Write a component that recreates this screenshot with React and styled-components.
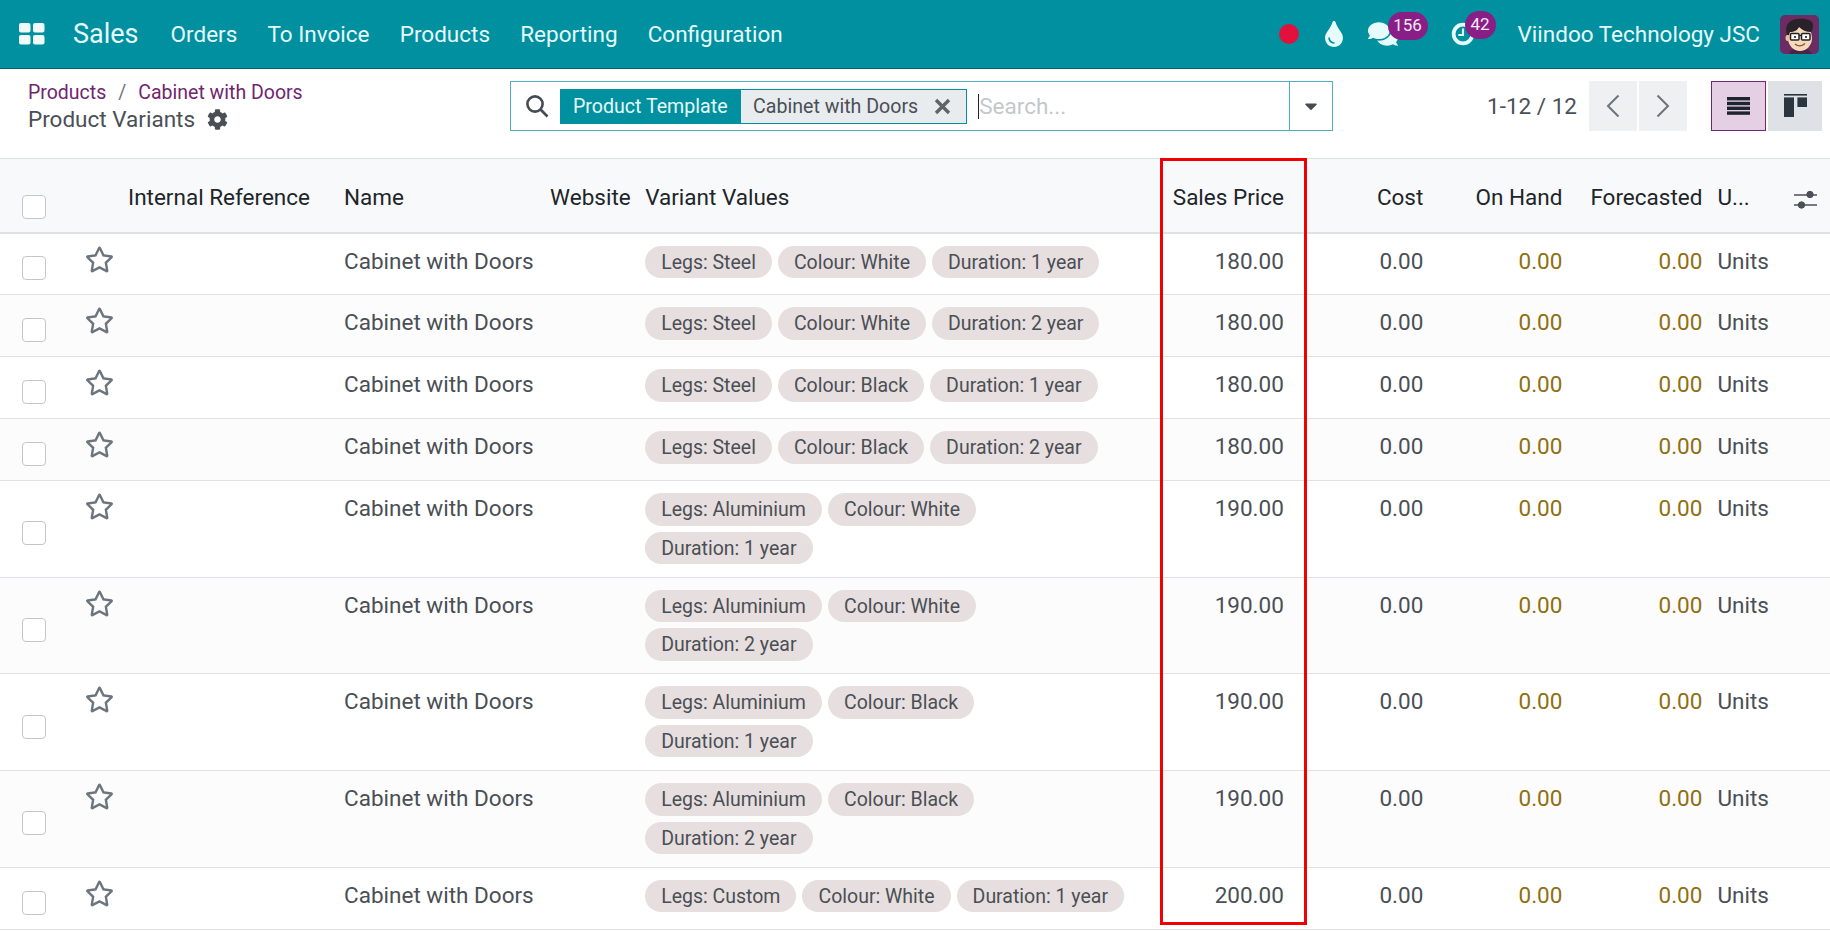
import React from 'react'
import styled, { createGlobalStyle } from 'styled-components'
import { FaCog, FaTint, FaComments, FaCaretDown, FaRegStar } from 'react-icons/fa'

const GlobalStyle = createGlobalStyle`
  html, body {
    margin: 0;
    height: 100%;
    overflow: hidden;
    background: #fff;
    font-family: Roboto, "Liberation Sans", sans-serif;
    font-size: 22.5px;
    color: #4a4f55;
  }
`

const Navbar = styled.header`
  display: flex;
  align-items: center;
  height: 68px;
  padding: 0 11px 0 19px;
  background: #01909f;
  border-bottom: 1px solid #0b5f69;
  color: #e6fbfc;
`
const AppsIcon = styled.svg`
  width: 26px;
  height: 22px;
  margin-right: 28px;
  fill: #f0fbfc;
`
const Brand = styled.span`
  font-size: 27px;
  margin-right: 32px;
`
const NavLink = styled.span`
  margin-right: 30.2px;
`
const NavRight = styled.div`
  display: flex;
  align-items: center;
  margin-left: auto;
`
const RecordDot = styled.span`
  width: 20px;
  height: 20px;
  border-radius: 50%;
  background: #e2103c;
  margin-right: 25px;
`
const IconBox = styled.span`
  position: relative;
  display: flex;
  align-items: center;
  justify-content: center;
  width: ${p => p.$w}px;
  margin-right: ${p => p.$mr}px;
`
const Badge = styled.span`
  position: absolute;
  top: -7px;
  left: ${p => p.$left}px;
  min-width: ${p => p.$w}px;
  height: 28px;
  line-height: 26px;
  border-radius: 14px;
  background: #8a1e87;
  color: #f6e9f6;
  font-size: 17px;
  text-align: center;
`
const UserName = styled.span`
  margin-right: 20px;
`
const Avatar = styled.svg`
  width: 39px;
  height: 39px;
  display: block;
`

const SubBar = styled.section`
  display: flex;
  align-items: flex-start;
  height: 89px;
  padding: 12px 8px 0 0;
  box-sizing: border-box;
`
const TitleBlock = styled.div`
  width: 510px;
  flex: none;
  padding: 1px 0 0 28px;
  box-sizing: border-box;
`
const Breadcrumb = styled.div`
  font-size: 19.5px;
  line-height: 22px;
  margin-bottom: 1px;
  color: #6c757d;
  a {
    color: #71256f;
  }
`
const Slash = styled.span`
  margin: 0 12px;
`
const PageTitle = styled.div`
  display: flex;
  align-items: center;
  gap: 12px;
  line-height: 28px;
  svg {
    width: 21px;
    height: 21px;
  }
`
const SearchBox = styled.div`
  display: flex;
  align-items: center;
  width: 823px;
  height: 50px;
  flex: none;
  box-sizing: border-box;
  border: 1px solid #4fb0bb;
`
const SearchIcon = styled.svg`
  width: 24px;
  height: 24px;
  margin: 0 10.5px 0 14px;
  flex: none;
`
const Facet = styled.div`
  display: flex;
  height: 35px;
  align-items: stretch;
  box-sizing: border-box;
  font-size: 19.6px;
  flex: none;
`
const FacetLabel = styled.span`
  display: flex;
  align-items: center;
  padding: 0 13.5px;
  background: #01909f;
  color: #e6fbfc;
`
const FacetValue = styled.span`
  display: flex;
  align-items: center;
  gap: 16px;
  padding: 0 15px 0 12px;
  background: #e9ecef;
  border: 1px solid #01909f;
  border-left: none;
`
const FacetClose = styled.svg`
  width: 17px;
  height: 17px;
  fill: none;
  stroke: #5f6468;
  stroke-width: 3.4;
`
const TextCaret = styled.span`
  width: 1px;
  height: 25px;
  margin-left: 11px;
  background: #222;
  flex: none;
`
const SearchInput = styled.input`
  flex: 1;
  min-width: 0;
  border: none;
  outline: none;
  font: inherit;
  padding: 0;
  &::placeholder {
    color: #c3c8cc;
  }
`
const CaretButton = styled.span`
  display: flex;
  align-items: center;
  justify-content: center;
  width: 42px;
  height: 100%;
  flex: none;
  border-left: 1px solid #4fb0bb;
  color: #444b52;
`
const ControlsRight = styled.div`
  display: flex;
  flex: 1;
  justify-content: flex-end;
  align-items: center;
  height: 50px;
`
const PagerText = styled.span`
  margin-right: 12px;
`
const SquareButton = styled.span`
  display: flex;
  align-items: center;
  justify-content: center;
  box-sizing: border-box;
  width: ${p => p.$w}px;
  height: 50px;
  margin-left: ${p => p.$ml || 0}px;
  background: ${p => p.$active ? '#e5cfe4' : p.$light ? '#eef0f2' : '#dee2e6'};
  border: ${p => p.$active ? '1px solid #71256f' : 'none'};
`

const TableWrap = styled.div`
  position: relative;
`
const RedFrame = styled.div`
  position: absolute;
  top: 0;
  left: 1160px;
  width: 147px;
  height: 767px;
  box-sizing: border-box;
  border: 3px solid #f00000;
  pointer-events: none;
`
const Table = styled.table`
  width: 1830px;
  table-layout: fixed;
  border-collapse: collapse;
`
const HeadRow = styled.tr`
  height: 74px;
  background: #f8f9fa;
  border-top: 1px solid #dee2e6;
  border-bottom: 2px solid #dee2e6;
`
const Th = styled.th`
  padding: 4px 7.5px 0;
  font-weight: 400;
  color: #212529;
  text-align: ${p => p.$right ? 'right' : 'left'};
  white-space: nowrap;
  overflow: hidden;
`
const OptionsCell = styled.th`
  padding: 14px 0 0 4px;
  text-align: left;
`
const Row = styled.tr`
  height: 62px;
  background: ${p => p.$odd ? '#fcfcfc' : '#fff'};
  border-bottom: 1px solid #dee2e6;
`
const Td = styled.td`
  padding: 12px 7.5px 12.7px;
  vertical-align: top;
  line-height: 30px;
  text-align: ${p => p.$right ? 'right' : 'left'};
  color: ${p => p.$warn ? '#8f6f10' : 'inherit'};
`
const CheckCell = styled.td`
  padding: 9px 0 0 22px;
  vertical-align: middle;
  line-height: 0;
`
const HeadCheckCell = styled.th`
  padding: 24px 0 0 22px;
  line-height: 0;
`
const Check = styled.span`
  display: block;
  box-sizing: border-box;
  width: 24px;
  height: 24px;
  background: #fff;
  border: 1px solid #c3c6c9;
  border-radius: 4px;
`
const StarCell = styled.td`
  padding: 12px 0 0 7px;
  vertical-align: top;
  line-height: 0;
  color: #6c757d;
  svg {
    width: 29px;
    height: 27px;
  }
`
const Tags = styled.div`
  display: flex;
  flex-wrap: wrap;
  gap: 6px;
  width: 490px;
`
const Tag = styled.span`
  height: 32.5px;
  line-height: 33px;
  padding: 0 16px;
  border-radius: 17px;
  background: #e7dfdf;
  font-size: 19.5px;
`

const rows = [
  [180, ['Legs: Steel', 'Colour: White', 'Duration: 1 year']],
  [180, ['Legs: Steel', 'Colour: White', 'Duration: 2 year']],
  [180, ['Legs: Steel', 'Colour: Black', 'Duration: 1 year']],
  [180, ['Legs: Steel', 'Colour: Black', 'Duration: 2 year']],
  [190, ['Legs: Aluminium', 'Colour: White', 'Duration: 1 year']],
  [190, ['Legs: Aluminium', 'Colour: White', 'Duration: 2 year']],
  [190, ['Legs: Aluminium', 'Colour: Black', 'Duration: 1 year']],
  [190, ['Legs: Aluminium', 'Colour: Black', 'Duration: 2 year']],
  [200, ['Legs: Custom', 'Colour: White', 'Duration: 1 year']],
]

const colWidths = [78, 42.5, 216, 206, 95, 527.5, 126, 139.5, 139, 140, 80, 40]

const AppsGlyph = () => (
  <AppsIcon viewBox="0 0 26 22">
    <rect x="0" y="0" width="11.5" height="9.5" rx="2" />
    <rect x="14" y="0" width="11.5" height="9.5" rx="2" />
    <rect x="0" y="12" width="11.5" height="9.5" rx="2" />
    <rect x="14" y="12" width="11.5" height="9.5" rx="2" />
  </AppsIcon>
)

const ClockGlyph = () => (
  <svg width="32" height="32" viewBox="0 0 32 32" fill="none" stroke="#e6fbfc">
    <circle cx="16" cy="16" r="10" strokeWidth="4" />
    <path d="M16 10v7h-5" strokeWidth="2.2" />
  </svg>
)

const AvatarGlyph = () => (
  <Avatar viewBox="0 0 39 39">
    <rect width="39" height="39" rx="5" fill="#6a2c63" />
    <path d="M9 39c1-4 5-6 11-6s10 2 12 6z" fill="#4a2445" />
    <ellipse cx="20" cy="23" rx="12" ry="13" fill="#f6d8bd" />
    <ellipse cx="7.5" cy="23" rx="2" ry="3" fill="#eebf9c" />
    <path d="M7 20C4 11 9 4 18 4c8-1 15 1 15 6 0 4-1 6-2 7-5 0-9-2-12-5-1 3-5 5-9 5l-1 3z" fill="#2a2229" />
    <rect x="10.5" y="18.5" width="8.5" height="6.5" rx="1" fill="#fff" stroke="#222" strokeWidth="1.5" />
    <rect x="21.5" y="18.5" width="8.5" height="6.5" rx="1" fill="#fff" stroke="#222" strokeWidth="1.5" />
    <path d="M19 20.5h2.5" stroke="#222" strokeWidth="1.3" />
    <circle cx="15" cy="22" r="1.1" fill="#222" />
    <circle cx="26" cy="22" r="1.1" fill="#222" />
    <path d="M15 29c3 2.5 7 2.5 10-.5" stroke="#8a4a35" strokeWidth="1.4" fill="none" />
  </Avatar>
)

const Chevron = ({ left }) => (
  <svg width="14" height="24" viewBox="0 0 14 24" fill="none" stroke="#6c757d" strokeWidth="2">
    <path d={left ? 'M12.5 1.5 2 12l10.5 10.5' : 'M1.5 1.5 12 12 1.5 22.5'} />
  </svg>
)

const ListGlyph = () => (
  <svg width="23" height="18" viewBox="0 0 23 18" fill="#1d2530">
    <rect y="0" width="23" height="3.4" />
    <rect y="4.8" width="23" height="3.4" />
    <rect y="9.6" width="23" height="3.4" />
    <rect y="14.4" width="23" height="3.4" />
  </svg>
)

const KanbanGlyph = () => (
  <svg width="23" height="24" viewBox="0 0 23 24" fill="#2b3540">
    <rect width="23" height="1.6" />
    <rect y="3.4" width="10" height="19.6" />
    <rect x="13.4" y="3.4" width="9.6" height="9.6" />
  </svg>
)

const OptionsGlyph = () => (
  <svg width="24" height="20" viewBox="0 0 24 20" fill="#4a5058" stroke="#4a5058">
    <path d="M0 5h23M0 15h23" strokeWidth="1.4" />
    <circle cx="16" cy="4.5" r="3.2" />
    <circle cx="7.5" cy="15" r="3.2" />
  </svg>
)

const App = () => (
  <>
    <GlobalStyle />
    <Navbar>
      <AppsGlyph />
      <Brand>Sales</Brand>
      <NavLink>Orders</NavLink>
      <NavLink>To Invoice</NavLink>
      <NavLink>Products</NavLink>
      <NavLink>Reporting</NavLink>
      <NavLink>Configuration</NavLink>
      <NavRight>
        <RecordDot />
        <IconBox $w={20} $mr={24}><FaTint size={26} /></IconBox>
        <IconBox $w={30} $mr={50}>
          <FaComments size={30} />
          <Badge $left={20} $w={40}>156</Badge>
        </IconBox>
        <IconBox $w={30} $mr={40}>
          <ClockGlyph />
          <Badge $left={17} $w={31}>42</Badge>
        </IconBox>
        <UserName>Viindoo Technology JSC</UserName>
        <AvatarGlyph />
      </NavRight>
    </Navbar>

    <SubBar>
      <TitleBlock>
        <Breadcrumb>
          <a>Products</a><Slash>/</Slash><a>Cabinet with Doors</a>
        </Breadcrumb>
        <PageTitle>Product Variants <FaCog /></PageTitle>
      </TitleBlock>
      <SearchBox>
        <SearchIcon viewBox="0 0 24 24" fill="none" stroke="#444b52" strokeWidth="2.6">
          <circle cx="10" cy="10" r="7.6" />
          <path d="M15.5 15.5 22.5 22.5" />
        </SearchIcon>
        <Facet>
          <FacetLabel>Product Template</FacetLabel>
          <FacetValue>
            Cabinet with Doors
            <FacetClose viewBox="0 0 17 17"><path d="M2 2 15 15M15 2 2 15" /></FacetClose>
          </FacetValue>
        </Facet>
        <TextCaret />
        <SearchInput placeholder="Search..." />
        <CaretButton><FaCaretDown size={20} /></CaretButton>
      </SearchBox>
      <ControlsRight>
        <PagerText>1-12 / 12</PagerText>
        <SquareButton $w={48} $light><Chevron left /></SquareButton>
        <SquareButton $w={48} $ml={2} $light><Chevron /></SquareButton>
        <SquareButton $w={55} $ml={24} $active><ListGlyph /></SquareButton>
        <SquareButton $w={54} $ml={2}><KanbanGlyph /></SquareButton>
      </ControlsRight>
    </SubBar>

    <TableWrap>
      <Table>
        <colgroup>
          {colWidths.map((w, i) => <col key={i} width={w} />)}
        </colgroup>
        <thead>
          <HeadRow>
            <HeadCheckCell><Check /></HeadCheckCell>
            <Th />
            <Th>Internal Reference</Th>
            <Th>Name</Th>
            <Th>Website</Th>
            <Th>Variant Values</Th>
            <Th $right>Sales Price</Th>
            <Th $right>Cost</Th>
            <Th $right>On Hand</Th>
            <Th $right>Forecasted</Th>
            <Th>U...</Th>
            <OptionsCell><OptionsGlyph /></OptionsCell>
          </HeadRow>
        </thead>
        <tbody>
          {rows.map(([price, tags], i) => (
            <Row key={i} $odd={i % 2 === 1}>
              <CheckCell><Check /></CheckCell>
              <StarCell><FaRegStar /></StarCell>
              <Td />
              <Td>Cabinet with Doors</Td>
              <Td />
              <Td>
                <Tags>{tags.map(t => <Tag key={t}>{t}</Tag>)}</Tags>
              </Td>
              <Td $right>{price}.00</Td>
              <Td $right>0.00</Td>
              <Td $right $warn>0.00</Td>
              <Td $right $warn>0.00</Td>
              <Td>Units</Td>
              <Td />
            </Row>
          ))}
        </tbody>
      </Table>
      <RedFrame />
    </TableWrap>
  </>
)

export default App
